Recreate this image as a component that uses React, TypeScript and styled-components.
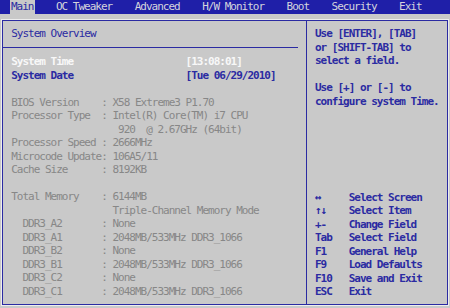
import React from "react";
import styled, { createGlobalStyle } from "styled-components";

const BLUE = "#2b2ba2";
const BAR = "#1f1fa8";
const BG = "#c9c9c9";
const GREY = "#878787";

const GlobalStyle = createGlobalStyle`
  html, body { margin: 0; padding: 0; background: ${BG}; }
  body { width: 450px; height: 308px; overflow: hidden; }
`;

const Screen = styled.div`
  width: 450px;
  height: 308px;
  display: flex;
  flex-direction: column;
  background: ${BG};
  font-family: "DejaVu Sans Mono", "Liberation Mono", monospace;
  font-size: 11px;
  letter-spacing: -1px;
  line-height: 13.5px;
`;

const MenuBar = styled.nav`
  flex: none;
  height: 14px;
  background: ${BAR};
  display: flex;
  padding-left: 10px;
  gap: 20.5px;
`;

const MenuItem = styled.div<{ $active?: boolean }>`
  padding: 0 1px;
  line-height: 14px;
  white-space: pre;
  color: ${(p) => (p.$active ? BLUE : "#d4d4dc")};
  background: ${(p) => (p.$active ? BG : "transparent")};
`;

const Frame = styled.main`
  flex: none;
  margin: 6px 2px 0;
  height: 285px;
  box-sizing: border-box;
  border: 1px solid ${BLUE};
  box-shadow: 0 0 0 1px #ededed;
  display: grid;
  grid-template-columns: 303px 1fr;
`;

const LeftPanel = styled.section`
  padding-top: 6px;
  display: flex;
  flex-direction: column;
`;

const Title = styled.div`
  padding-left: 8.25px;
  height: 13.5px;
  color: ${BLUE};
  white-space: pre;
`;

const Separator = styled.hr`
  border: 0;
  height: 1px;
  background: ${BLUE};
  margin: 6.5px 8px 7.25px 0;
`;

type Tone = "label" | "selected" | "active";

const Row = styled.div<{ $tone?: Tone }>`
  padding-left: 8.25px;
  height: 13.5px;
  white-space: pre;
  color: ${(p) =>
    p.$tone === "selected" ? "#f8f8f8" : p.$tone === "active" ? BLUE : GREY};
  font-weight: ${(p) => (p.$tone ? 700 : 400)};
`;

const RightPanel = styled.aside`
  border-left: 1px solid ${BLUE};
  padding: 6px 0 5.5px 8px;
  display: flex;
  flex-direction: column;
  justify-content: space-between;
  color: ${BLUE};
  font-weight: 700;
`;

const HelpLine = styled.div`
  height: 13.5px;
  white-space: pre;
`;

const KeyList = styled.div`
  display: flex;
  flex-direction: column;
`;

const KeyRow = styled.div`
  display: grid;
  grid-template-columns: 33.75px 1fr;
  height: 13.5px;
  white-space: pre;
`;

const menu = ["Main", "OC Tweaker", "Advanced", "H/W Monitor", "Boot", "Security", "Exit"];

const field = (label: string, value: string) => label.padEnd(16) + ": " + value;

const rows: { text: string; tone?: Tone }[] = [
  { text: "System Time".padEnd(31) + "[13:08:01]", tone: "selected" },
  { text: "System Date".padEnd(31) + "[Tue 06/29/2010]", tone: "active" },
  { text: "" },
  { text: field("BIOS Version", "X58 Extreme3 P1.70") },
  { text: field("Processor Type", "Intel(R) Core(TM) i7 CPU") },
  { text: "".padEnd(18) + " 920  @ 2.67GHz (64bit)" },
  { text: field("Processor Speed", "2666MHz") },
  { text: field("Microcode Update", "106A5/11") },
  { text: field("Cache Size", "8192KB") },
  { text: "" },
  { text: field("Total Memory", "6144MB") },
  { text: "".padEnd(18) + "Triple-Channel Memory Mode" },
  { text: field("  DDR3_A2", "None") },
  { text: field("  DDR3_A1", "2048MB/533MHz DDR3_1066") },
  { text: field("  DDR3_B2", "None") },
  { text: field("  DDR3_B1", "2048MB/533MHz DDR3_1066") },
  { text: field("  DDR3_C2", "None") },
  { text: field("  DDR3_C1", "2048MB/533MHz DDR3_1066") },
];

const help = [
  "Use [ENTER], [TAB]",
  "or [SHIFT-TAB] to",
  "select a field.",
  "",
  "Use [+] or [-] to",
  "configure system Time.",
];

const keys: [string, string][] = [
  ["↔", "Select Screen"],
  ["↑↓", "Select Item"],
  ["+-", "Change Field"],
  ["Tab", "Select Field"],
  ["F1", "General Help"],
  ["F9", "Load Defaults"],
  ["F10", "Save and Exit"],
  ["ESC", "Exit"],
];

export default function App() {
  return (
    <>
      <GlobalStyle />
      <Screen>
        <MenuBar>
          {menu.map((m, i) => (
            <MenuItem key={m} $active={i === 0}>
              {m}
            </MenuItem>
          ))}
        </MenuBar>
        <Frame>
          <LeftPanel>
            <Title>System Overview</Title>
            <Separator />
            {rows.map((r, i) => (
              <Row key={i} $tone={r.tone}>
                {r.text}
              </Row>
            ))}
          </LeftPanel>
          <RightPanel>
            <div>
              {help.map((h, i) => (
                <HelpLine key={i}>{h}</HelpLine>
              ))}
            </div>
            <KeyList>
              {keys.map(([k, d]) => (
                <KeyRow key={k}>
                  <span>{k}</span>
                  <span>{d}</span>
                </KeyRow>
              ))}
            </KeyList>
          </RightPanel>
        </Frame>
      </Screen>
    </>
  );
}
